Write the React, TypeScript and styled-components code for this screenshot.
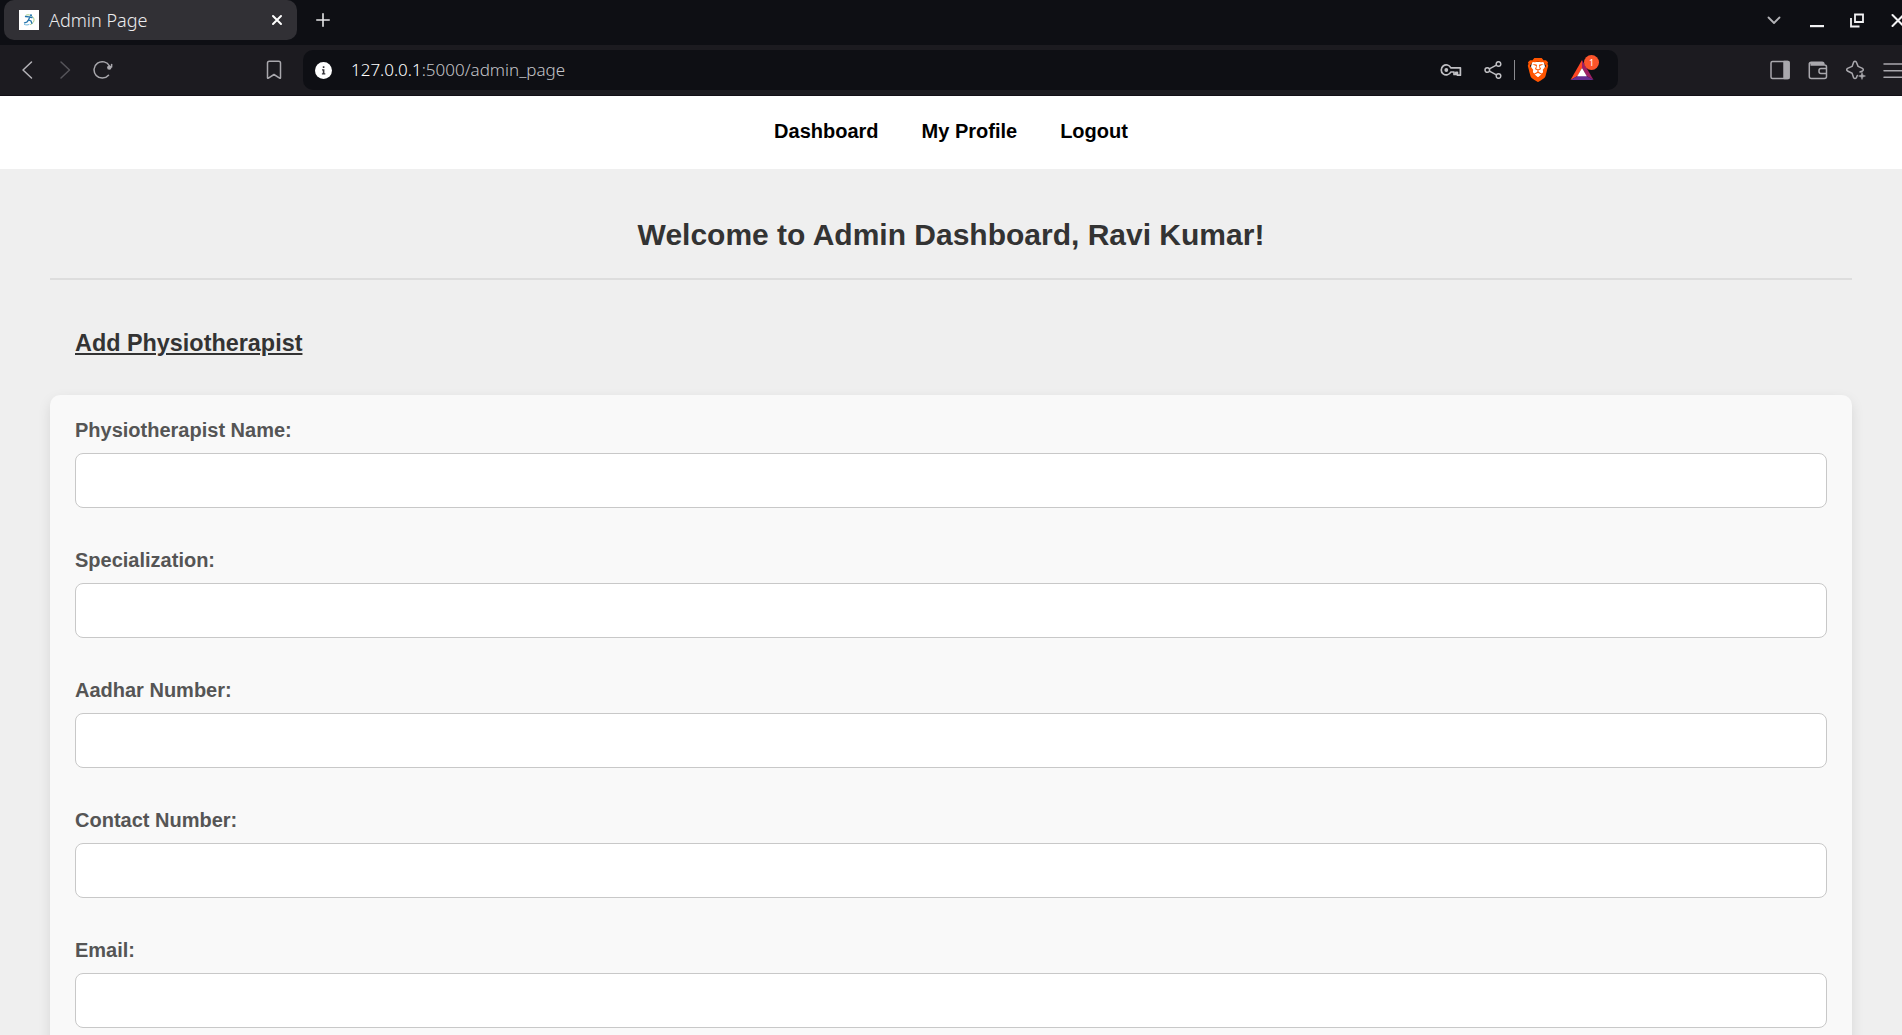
import React from "react";
import styled, { createGlobalStyle } from "styled-components";
import { SiBrave } from "react-icons/si";

const GlobalStyle = createGlobalStyle`
  *, *::before, *::after { box-sizing: border-box; }
  body { margin: 0; font-family: "Liberation Sans", Arial, sans-serif; }
`;

const Window = styled.div`
  display: flex;
  flex-direction: column;
  height: 100vh;
  overflow: hidden;
  background: #efefef;
`;

const Chrome = styled.header`
  flex: none;
  overflow: hidden;
  background: #1c1b20;
  border-bottom: 1px solid #120f16;
  color: #a9a8ad;
  font-family: "Noto Sans", "Open Sans", sans-serif;
`;

const TabStrip = styled.div`
  display: flex;
  height: 45px;
  padding-left: 4px;
  background: #0e0f14;
`;

const Tab = styled.div`
  display: flex;
  align-items: center;
  flex: 0 0 293px;
  height: 40px;
  padding-left: 15px;
  border-radius: 10px;
  background: #313035;
`;

const TabTitle = styled.span`
  flex: 1;
  margin-left: 10px;
  color: #ececee;
  font-size: 18px;
  font-weight: 300;
  line-height: 24px;
`;

const IconButton = styled.button<{ $width?: number; $tone?: string }>`
  display: flex;
  align-items: center;
  justify-content: center;
  flex: none;
  width: ${(p) => p.$width ?? 38}px;
  height: 40px;
  padding: 0;
  border: 0;
  background: none;
  color: ${(p) => p.$tone ?? "inherit"};

  svg { flex: none; display: block; }
`;

const WindowControls = styled.div`
  display: flex;
  flex: 0 0 148px;
  min-width: 0;
  margin-left: auto;
`;

const Toolbar = styled.div`
  display: flex;
  padding: 5px 0;
`;

const NavButtons = styled.div`
  display: flex;
  flex: 0 0 303px;
  padding: 0 10px 0 8px;
`;

const Spacer = styled.div`
  flex: 1;
`;

const AddressBar = styled.div`
  display: flex;
  align-items: center;
  flex: 1;
  min-width: 0;
  padding-right: 15px;
  border-radius: 10px;
  background: #0e0f14;
`;

const Address = styled.div`
  flex: 1;
  margin-left: 8px;
  overflow: hidden;
  white-space: nowrap;
  color: #c4c4c8;
  font-size: 17px;
  font-weight: 300;
  line-height: 24px;
  outline: none;
`;

const Host = styled.span`
  color: #ffffff;
`;

const Divider = styled.span`
  flex: none;
  width: 1px;
  height: 20px;
  background: #8b8b90;
`;

const Extension = styled.div`
  position: relative;
  flex: none;
`;

const Badge = styled.span`
  position: absolute;
  top: 5px;
  right: 4px;
  width: 15px;
  height: 15px;
  border-radius: 8px;
  background: #fb542b;
  color: #ffffff;
  font-size: 9px;
  line-height: 15px;
  text-align: center;
`;

const ToolbarEnd = styled.div`
  display: flex;
  flex: 0 0 284px;
  min-width: 0;
  padding-left: 143px;
`;

const Page = styled.div`
  flex: 1;
  min-height: 0;
  overflow-y: auto;
  scrollbar-width: none;
`;

const SiteNav = styled.nav`
  display: flex;
  justify-content: center;
  gap: 43px;
  padding: 24px 25px 27px;
  background: #ffffff;
`;

const NavLink = styled.a`
  color: #000000;
  font-size: 20px;
  font-weight: 700;
  line-height: 22px;
  text-decoration: none;
`;

const Content = styled.main`
  padding: 50px;
  font-size: 20px;
`;

const Title = styled.h1`
  margin: 0;
  padding-bottom: 27px;
  border-bottom: 2px solid #dddddd;
  color: #333333;
  font-size: 30px;
  line-height: 32px;
  text-align: center;
`;

const SectionTitle = styled.h3`
  margin: 0;
  padding: 50px 25px 39px;
  color: #333333;
  line-height: 26px;
  text-decoration: underline;
`;

const Form = styled.form`
  display: flex;
  flex-direction: column;
  gap: 41px;
  padding: 24px 25px;
  border-radius: 10px;
  background: #f9f9f9;
  box-shadow: 0 5px 13px rgba(0, 0, 0, 0.1);
`;

const Field = styled.div`
  display: flex;
  flex-direction: column;
  gap: 12px;
`;

const Label = styled.label`
  color: #555555;
  font-size: 20px;
  font-weight: 700;
  line-height: 22px;
`;

const TextInput = styled.input`
  width: 100%;
  height: 55px;
  padding: 15px;
  border: 1px solid #c8c8c8;
  border-radius: 8px;
  background: #ffffff;
  color: #333333;
  font-family: inherit;
  font-size: 20px;
`;

const stroke = {
  fill: "none",
  stroke: "currentColor",
  strokeWidth: 1.5,
  strokeLinecap: "round" as const,
  strokeLinejoin: "round" as const,
};

const Favicon = () => (
  <svg width="20" height="20" viewBox="0 0 20 20" aria-hidden="true">
    <rect width="20" height="20" fill="#fff" />
    <g fill="none" strokeLinecap="round">
      <path d="M7 5.200C9.500 3.800 14 5.500 15 9c.5 3-1.500 4.500-3.500 5.500" stroke="#a8cf8c" strokeWidth="1" />
      <path d="M6.500 6.500l3.500.3 3 .7M10.800 7L9.500 10l2.500 1 .8 2.300M9.500 10L8 12l-2.500.8" stroke="#2474ad" strokeWidth="1.300" />
      <path d="M5.500 14.500c2 .6 3 .6 4.500 0" stroke="#6fb6dd" strokeWidth="1" />
    </g>
    <circle cx="12" cy="5.200" r="1" fill="#2474ad" />
  </svg>
);

const CloseTabIcon = () => (
  <svg width="12" height="12" viewBox="0 0 12 12" {...stroke} strokeWidth={2}>
    <path d="M2 2l8 8M10 2l-8 8" />
  </svg>
);

const PlusIcon = () => (
  <svg width="14" height="14" viewBox="0 0 14 14" {...stroke} strokeWidth={1.6}>
    <path d="M7 .8v12.400M.8 7h12.400" />
  </svg>
);

const ChevronDownIcon = () => (
  <svg width="16" height="16" viewBox="0 0 16 16" {...stroke} strokeWidth={1.8}>
    <path d="M1.500 5.500L7 11l5.500-5.500" />
  </svg>
);

const MinimizeIcon = () => (
  <svg width="16" height="16" viewBox="0 0 16 16" fill="currentColor">
    <path d="M2 13h14v2.200H2z" />
  </svg>
);

const RestoreIcon = () => (
  <svg width="16" height="16" viewBox="0 0 16 16" fill="none" stroke="currentColor" strokeWidth="1.800">
    <path d="M6 2.500h8v7.500H6zM2 6v8.500h8.500" />
  </svg>
);

const CloseWindowIcon = () => (
  <svg width="14" height="14" viewBox="0 0 14 14" {...stroke} strokeWidth={2}>
    <path d="M1.500 2l11 11M12.500 2l-11 11" />
  </svg>
);

const BackIcon = () => (
  <svg width="20" height="20" viewBox="0 0 20 20" {...stroke}>
    <path d="M14.500 2L6 10l8.500 8" />
  </svg>
);

const ForwardIcon = () => (
  <svg width="20" height="20" viewBox="0 0 20 20" {...stroke}>
    <path d="M6 2l8.500 8L6 18" />
  </svg>
);

const ReloadIcon = () => (
  <svg width="20" height="20" viewBox="0 0 20 20" {...stroke}>
    <path d="M15.500 15.200A8.200 8.200 0 1 1 16.500 6" />
    <circle cx="16.300" cy="7.600" r="2.200" fill="currentColor" stroke="none" />
    <path d="M18.600 4.500V7" />
  </svg>
);

const BookmarkIcon = () => (
  <svg width="20" height="20" viewBox="0 0 20 20" {...stroke}>
    <path d="M3.500 3q0-1.800 1.800-1.800h9.400q1.800 0 1.800 1.800v14.700q0 1-.9.500L10 14.500l-5.600 3.700q-.9.500-.9-.5z" />
  </svg>
);

const InfoIcon = () => (
  <svg width="17" height="17" viewBox="0 0 17 17">
    <circle cx="8.500" cy="8.500" r="8.500" fill="#fff" />
    <path d="M7.800 4.200h1.600V6H7.800zM7 7.200h2.400v4.100h.9v1.200H6.900v-1.200h.9V8.400H7z" fill="#333238" />
  </svg>
);

const KeyIcon = () => (
  <svg width="22" height="14" viewBox="0 0 22 14" fill="none" stroke="currentColor" strokeWidth="1.700" strokeLinejoin="round">
    <path d="M10.800 4.800A5 5 0 1 0 10.800 9H14v2.500h1.800V9.300h1.600v2.900h3V4.800z" />
    <circle cx="6.300" cy="7" r="1.900" fill="currentColor" stroke="none" />
  </svg>
);

const ShareIcon = () => (
  <svg width="18" height="18" viewBox="0 0 18 18" fill="none" stroke="currentColor" strokeWidth="1.500">
    <circle cx="3.300" cy="9" r="2.300" />
    <circle cx="14.500" cy="3" r="2.300" />
    <circle cx="14.500" cy="15" r="2.300" />
    <path d="M5.400 7.900l7-3.700M5.400 10.100l7 3.700" />
  </svg>
);

const BraveIcon = () => (
  <svg width="22" height="24" viewBox="0 0 22 24">
    <path d="M5 4h12l1 5-3 9-4 3-4-3-3-9z" fill="#fff" />
    <SiBrave size={24} x={-1} y={0} color="#ff5500" />
  </svg>
);

const RewardsIcon = () => (
  <svg width="24" height="22" viewBox="0 0 24 22">
    <path d="M12 1L.5 21 7.500 17 12 9z" fill="#ff4724" />
    <path d="M12 1l11.500 20-7-4L12 9z" fill="#9e1f63" />
    <path d="M.5 21h23l-7-4h-9z" fill="#662d91" />
    <path d="M12 9l4.800 8.200H7.200z" fill="#fff" />
  </svg>
);

const SidebarIcon = () => (
  <svg width="20" height="20" viewBox="0 0 20 20" {...stroke}>
    <rect x="1" y="1.500" width="18" height="17" rx="1.500" />
    <path d="M14 1.500h4.200q.8 0 .8.800v15.400q0 .8-.8.800H14z" fill="currentColor" />
  </svg>
);

const WalletIcon = () => (
  <svg width="20" height="20" viewBox="0 0 20 20" {...stroke}>
    <path d="M1.300 3.500v13q0 2 2 2h13.200q2 0 2-2V7q0-2-2-2H3M1.300 4q0-1.800 2-1.800H14q2 0 2 2.500M3 3.700h12M18.500 8.500H13q-2 0-2 2v1q0 2 2 2h5.500" />
  </svg>
);

const SparkleIcon = () => (
  <svg width="20" height="20" viewBox="0 0 20 20" {...stroke}>
    <path d="M11.300 15.500l-.9 2.200q-1.400 1.600-2.800 0L6.100 13.200 1.500 11q-1.600-1.300 0-2.600L6.100 6.400 7.700 2q1.300-1.600 2.600 0l1.800 4.400L16.500 8.400q1.600 1.300 0 2.600l-2.500 1" />
    <path d="M16 12.500l.9 2.600 2.600.9-2.600.9-.9 2.600-.9-2.600-2.600-.9 2.600-.9z" fill="currentColor" strokeWidth="0.500" />
  </svg>
);

const MenuIcon = () => (
  <svg width="22" height="20" viewBox="0 0 22 20" {...stroke}>
    <path d="M1 4h20M1 10.700h20M1 17.200h20" />
  </svg>
);

const links = ["Dashboard", "My Profile", "Logout"];

const fields = [
  { id: "name", label: "Physiotherapist Name:", type: "text" },
  { id: "specialization", label: "Specialization:", type: "text" },
  { id: "aadhar", label: "Aadhar Number:", type: "text" },
  { id: "contact", label: "Contact Number:", type: "tel" },
  { id: "email", label: "Email:", type: "email" },
];

const BrowserChrome = () => (
  <Chrome>
    <TabStrip>
      <Tab>
        <Favicon />
        <TabTitle>Admin Page</TabTitle>
        <IconButton $width={40} $tone="#ffffff" aria-label="Close tab"><CloseTabIcon /></IconButton>
      </Tab>
      <IconButton $width={52} $tone="#e6e6e8" aria-label="New tab"><PlusIcon /></IconButton>
      <WindowControls>
        <IconButton $width={41} $tone="#b4b4b8" aria-label="Search tabs"><ChevronDownIcon /></IconButton>
        <IconButton $width={41} $tone="#f2f2f4" aria-label="Minimize"><MinimizeIcon /></IconButton>
        <IconButton $width={41} $tone="#f2f2f4" aria-label="Restore"><RestoreIcon /></IconButton>
        <IconButton $width={41} $tone="#f2f2f4" aria-label="Close window"><CloseWindowIcon /></IconButton>
      </WindowControls>
    </TabStrip>
    <Toolbar>
      <NavButtons>
        <IconButton $tone="#b4b3b8" aria-label="Back"><BackIcon /></IconButton>
        <IconButton $tone="#56555a" aria-label="Forward"><ForwardIcon /></IconButton>
        <IconButton aria-label="Reload"><ReloadIcon /></IconButton>
        <Spacer />
        <IconButton aria-label="Bookmark"><BookmarkIcon /></IconButton>
      </NavButtons>
      <AddressBar>
        <IconButton $width={40} aria-label="Site information"><InfoIcon /></IconButton>
        <Address role="textbox" aria-label="Address" contentEditable suppressContentEditableWarning spellCheck={false}>
          <Host>127.0.0.1</Host>:5000/admin_page
        </Address>
        <IconButton $width={42} $tone="#c0c0c4" aria-label="Passwords"><KeyIcon /></IconButton>
        <IconButton $width={42} $tone="#c0c0c4" aria-label="Share"><ShareIcon /></IconButton>
        <Divider />
        <IconButton $width={46} aria-label="Shields"><BraveIcon /></IconButton>
        <Extension>
          <IconButton $width={42} aria-label="Rewards"><RewardsIcon /></IconButton>
          <Badge>1</Badge>
        </Extension>
      </AddressBar>
      <ToolbarEnd>
        <IconButton aria-label="Sidebar"><SidebarIcon /></IconButton>
        <IconButton aria-label="Wallet"><WalletIcon /></IconButton>
        <IconButton aria-label="Assistant"><SparkleIcon /></IconButton>
        <IconButton aria-label="Menu"><MenuIcon /></IconButton>
      </ToolbarEnd>
    </Toolbar>
  </Chrome>
);

export default function App() {
  return (
    <Window>
      <GlobalStyle />
      <BrowserChrome />
      <Page>
        <SiteNav>
          {links.map((text) => (
            <NavLink key={text} href="#">{text}</NavLink>
          ))}
        </SiteNav>
        <Content>
          <Title>Welcome to Admin Dashboard, Ravi Kumar!</Title>
          <SectionTitle>Add Physiotherapist</SectionTitle>
          <Form>
            {fields.map((field) => (
              <Field key={field.id}>
                <Label htmlFor={field.id}>{field.label}</Label>
                <TextInput id={field.id} name={field.id} type={field.type} />
              </Field>
            ))}
          </Form>
        </Content>
      </Page>
    </Window>
  );
}
